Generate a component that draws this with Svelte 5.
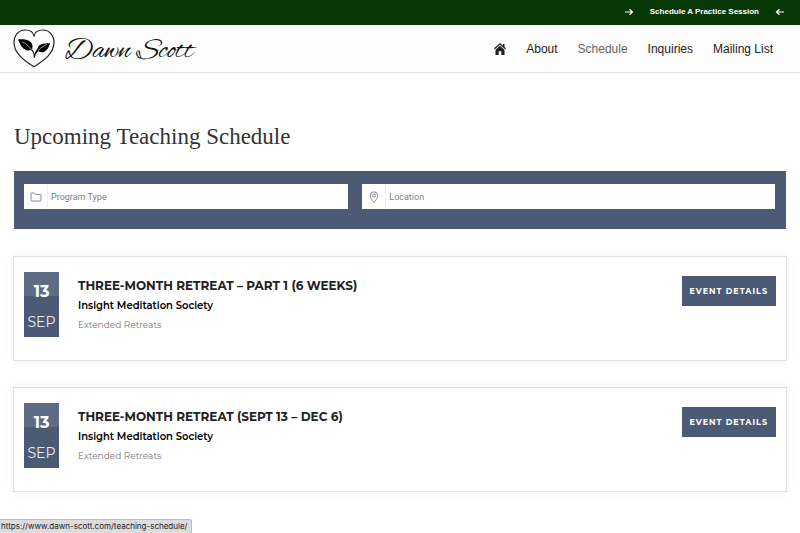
<script lang="ts">
  type Event = {
    day: string;
    month: string;
    title: string;
    location: string;
    type: string;
  };

  const links = ["About", "Schedule", "Inquiries", "Mailing List"];
  const current = "Schedule";

  const events: Event[] = [
    {
      day: "13",
      month: "SEP",
      title: "THREE-MONTH RETREAT – PART 1 (6 WEEKS)",
      location: "Insight Meditation Society",
      type: "Extended Retreats",
    },
    {
      day: "13",
      month: "SEP",
      title: "THREE-MONTH RETREAT (SEPT 13 – DEC 6)",
      location: "Insight Meditation Society",
      type: "Extended Retreats",
    },
  ];

  let programType = $state("");
  let location = $state("");
</script>

<div class="topbar">
  <svg class="arrow" viewBox="0 0 10 8" aria-hidden="true">
    <path d="M1 4h7.5M5.5 1.2 8.5 4l-3 2.8" />
  </svg>
  <a href="#practice">Schedule A Practice Session</a>
  <svg class="arrow" viewBox="0 0 10 8" aria-hidden="true">
    <path d="M9 4H1.5M4.5 1.2 1.5 4l3 2.8" />
  </svg>
</div>

<header>
  <a class="logo" href="#home">
    <svg viewBox="0 0 42 39" aria-hidden="true">
      <path
        class="heart"
        d="M21 7.500C20.500 3 16.500 1 12 1C5.500 1 1 6.500 1 13.500C1 24 10.500 31 21 37.800C31.500 31 41 24 41 13.500C41 6.500 36.500 1 30 1C25.500 1 21.500 3 21 7.500Z"
      />
      <path
        d="M5 10.500C11 10 16.500 10.500 18.800 14.500C19.800 16.500 19.500 18.500 19.200 20.500C20.500 22 21.300 23.500 21.500 25.200C22.300 22.700 23.300 21 24.600 19.400C25.500 15 30 14.300 37 14.200C35 21 31 25.500 25.200 22.200C23 24.200 22.200 25.500 22 28.800H20.700C21 25.200 20.200 23 18 21C11.500 22.800 8 18 5 10.500Z"
      />
      <path class="vein" d="M9 12.800C13.500 14.500 16 17.500 18.800 20.800M34 15.500C30.500 17 28 18.500 25 21.500" />
    </svg>
    <span>Dawn Scott</span>
  </a>
  <nav>
    <a href="#home" aria-label="Home">
      <svg class="home" viewBox="0 0 12 12">
        <path d="M6 0 8.800 2.400V1h1.700v2.900L12 5.300l-.9 1L6 1.800 .9 6.300 0 5.300Z" />
        <path d="M6 2.800 10.500 6.800V12H7.300V8.200H4.700V12H1.500V6.800Z" />
      </svg>
    </a>
    {#each links as link}
      <a href="#{link}" class:current={link === current}>{link}</a>
    {/each}
  </nav>
</header>

<main>
  <h1>Upcoming Teaching Schedule</h1>

  <form class="filters">
    <div class="field type">
      <label for="program-type" aria-label="Program Type">
        <svg viewBox="0 0 12 12">
          <path d="M1 2.500Q1 2 1.500 2H4.500L5.700 3.500H10.500Q11 3.500 11 4V9.500Q11 10 10.500 10H1.500Q1 10 1 9.500Z" />
        </svg>
      </label>
      <input id="program-type" type="text" placeholder="Program Type" bind:value={programType} />
    </div>
    <div class="field place">
      <label for="location" aria-label="Location">
        <svg viewBox="0 0 12 12">
          <path d="M6 11.300C3.600 8.500 2.200 6.600 2.200 4.600a3.800 3.800 0 0 1 7.600 0C9.800 6.600 8.400 8.500 6 11.300Z" />
          <circle cx="6" cy="4.600" r="1.500" />
        </svg>
      </label>
      <input id="location" type="text" placeholder="Location" bind:value={location} />
    </div>
  </form>

  {#each events as event}
    <article>
      <div class="date">
        <strong>{event.day}</strong>
        <span>{event.month}</span>
      </div>
      <div class="info">
        <h2>{event.title}</h2>
        <h3>{event.location}</h3>
        <p>{event.type}</p>
      </div>
      <button type="button">EVENT DETAILS</button>
    </article>
  {/each}
</main>

<div class="status">https://www.dawn-scott.com/teaching-schedule/</div>

<style>
  :global(body) {
    margin: 0;
    background: #fff;
    font-family: "Liberation Sans", Arial, sans-serif;
    color: #222;
  }
  a {
    color: inherit;
    text-decoration: none;
  }
  .topbar {
    display: flex;
    align-items: center;
    justify-content: flex-end;
    gap: 16px;
    box-sizing: border-box;
    height: 25px;
    padding: 0 15px 2px;
    background: #083808;
    color: #fff;
    font-size: 8px;
    font-weight: bold;
  }
  .arrow {
    width: 10px;
    height: 8px;
    fill: none;
    stroke: #fff;
    stroke-width: 1.2;
  }
  header {
    display: flex;
    align-items: center;
    justify-content: space-between;
    height: 47px;
    padding: 0 27px 0 13px;
    background: #fcfcfc;
    border-bottom: 1px solid #e4e4e4;
  }
  .logo {
    display: flex;
    align-items: center;
    gap: 10px;
    font-family: "Alex Brush", "Liberation Serif", serif;
    font-size: 30px;
    color: #111;
  }
  .logo svg {
    width: 42px;
    height: 39px;
  }
  .logo span {
    padding-top: 5px;
  }
  .heart {
    fill: none;
    stroke: #222;
    stroke-width: 1.2;
  }
  .vein {
    fill: none;
    stroke: #fcfcfc;
    stroke-width: 0.6;
  }
  nav {
    display: flex;
    align-items: center;
    gap: 20px;
    font-size: 12px;
  }
  .home {
    display: block;
    width: 12px;
    height: 12px;
    fill: #222;
  }
  .current {
    color: #666;
  }
  main {
    padding: 50px 14px 0;
  }
  h1 {
    margin: 0 0 20px;
    font: 23px/28px "Liberation Serif", "Times New Roman", serif;
    color: #333;
  }
  .filters {
    display: flex;
    gap: 14px;
    margin-bottom: 27px;
    padding: 13px 11px 20px 10px;
    background: #4c5a75;
  }
  .field {
    display: flex;
    height: 25px;
    background: #fff;
  }
  .type {
    flex: 11;
  }
  .place {
    flex: 14;
  }
  label {
    display: flex;
    align-items: center;
    justify-content: center;
    width: 23px;
    border-right: 1px solid #eee;
  }
  label svg {
    width: 12px;
    height: 12px;
    fill: none;
    stroke: #66708a;
    stroke-width: 0.8;
  }
  input {
    flex: 1;
    min-width: 0;
    padding: 0 3px;
    border: 0;
    outline: 0;
    background: none;
    font: 9px Roboto, sans-serif;
  }
  input::placeholder {
    color: #808080;
  }
  article {
    display: flex;
    align-items: flex-start;
    box-sizing: border-box;
    min-height: 105px;
    margin: 0 -1px 26px;
    padding: 15px 10px;
    border: 1px solid #e2e2e2;
    box-shadow: 0 0 10px rgba(0, 0, 0, 0.06);
    font-family: Montserrat, Inter, sans-serif;
  }
  .date {
    display: flex;
    flex-direction: column;
    width: 35px;
    height: 65px;
    background: linear-gradient(#5f6c86 24px, #4c5a75 24px);
    color: #fff;
    text-align: center;
  }
  .date strong {
    padding-top: 10px;
    font-size: 16px;
    line-height: 20px;
  }
  .date span {
    padding-top: 10px;
    font-size: 14px;
    line-height: 20px;
    color: #e6eaf2;
  }
  .info {
    flex: 1;
    padding: 6px 0 0 19px;
  }
  h2 {
    margin: 0;
    font-size: 12px;
    line-height: 16px;
    color: #222;
  }
  h3 {
    margin: 4px 0;
    font-size: 10px;
    font-weight: 600;
    line-height: 16px;
    color: #000;
  }
  p {
    margin: 0;
    font-size: 9px;
    line-height: 14px;
    color: #777;
  }
  button {
    height: 30px;
    margin-top: 4px;
    padding: 0 8px;
    border: 0;
    background: #4c5a75;
    color: #fff;
    font: bold 8px Montserrat, Inter, sans-serif;
    letter-spacing: 1px;
  }
  .status {
    position: fixed;
    bottom: 0;
    left: 0;
    padding: 0 4px 0 1px;
    border: 1px solid #bbb;
    border-width: 1px 1px 0 0;
    border-radius: 0 3px 0 0;
    background: #dcdcdc;
    font: 8px/13px Inter, sans-serif;
    color: #222;
  }
</style>
